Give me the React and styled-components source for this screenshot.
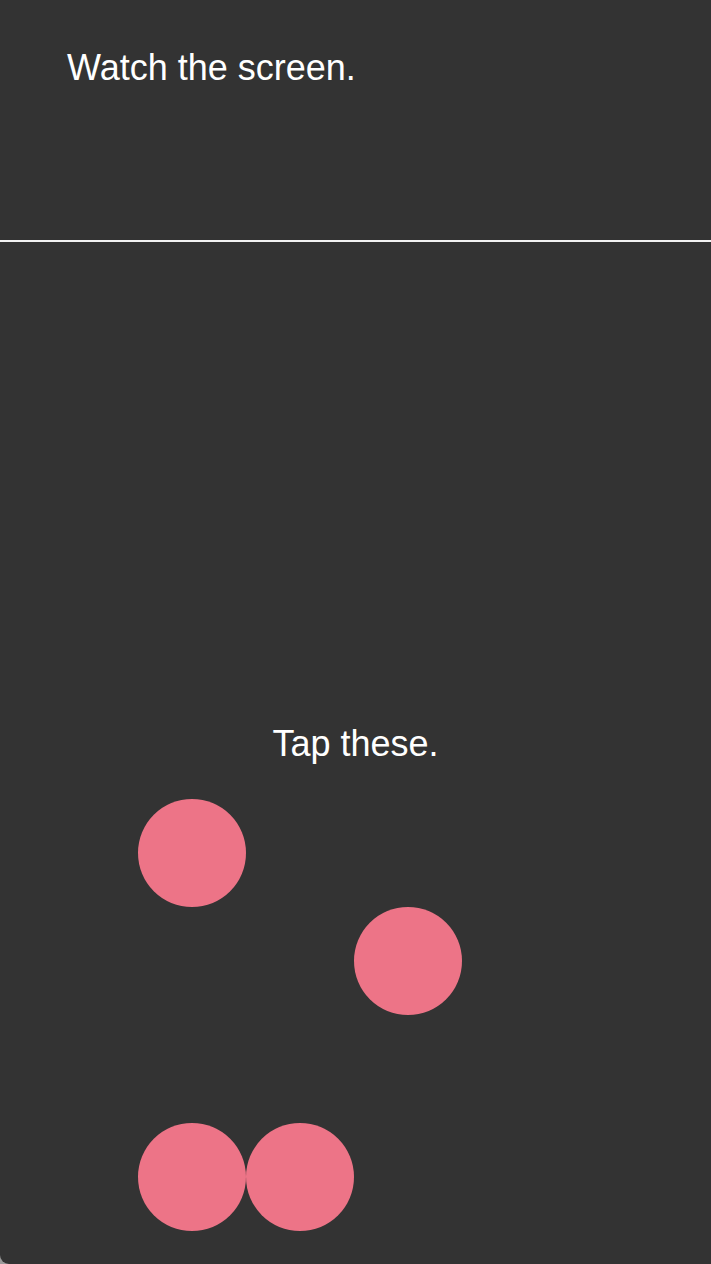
import React from "react";
import styled, { createGlobalStyle } from "styled-components";

const Global = createGlobalStyle`
  html, body { margin: 0; padding: 0; background: #9a9a9a; }
  body { font-family: "Liberation Sans", Arial, Helvetica, sans-serif; }
`;

const Screen = styled.div`
  min-height: 1264px;
  background: #333333;
  color: #ffffff;
  border-bottom-left-radius: 9px;
  display: flex;
  flex-direction: column;
  overflow: hidden;
`;

const Header = styled.header`
  height: 242px;
  box-sizing: border-box;
  padding: 47px 0 0 67px;
  border-bottom: 2px solid #f2f2f2;
`;

const Prompt = styled.div`
  font-size: 36px;
  line-height: 41px;
  text-align: ${(p) => (p.$center ? "center" : "left")};
`;

const Game = styled.main`
  display: flex;
  flex-direction: column;
  padding-top: 481px;
`;

const Grid = styled.div`
  display: grid;
  grid-template-columns: repeat(4, 108px);
  grid-template-rows: repeat(4, 108px);
  margin-top: 35px;
  padding-left: 138px;
`;

const Dot = styled.div`
  grid-column: ${(p) => p.$col + 1};
  grid-row: ${(p) => p.$row + 1};
  border-radius: 50%;
  background: #ed7487;
`;

const dots = [
  { row: 0, col: 0 },
  { row: 1, col: 2 },
  { row: 3, col: 0 },
  { row: 3, col: 1 },
];

export default function App() {
  return (
    <>
      <Global />
      <Screen>
        <Header>
          <Prompt>Watch the screen.</Prompt>
        </Header>
        <Game>
          <Prompt $center>Tap these.</Prompt>
          <Grid>
            {dots.map((d, i) => (
              <Dot key={i} $row={d.row} $col={d.col} />
            ))}
          </Grid>
        </Game>
      </Screen>
    </>
  );
}
